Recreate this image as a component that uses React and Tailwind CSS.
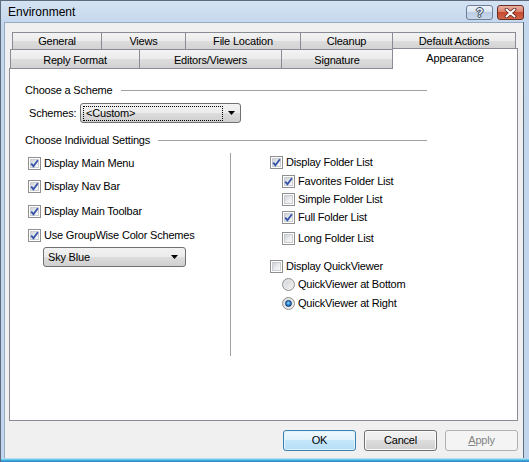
import React from "react";

const tabBg =
  "bg-[linear-gradient(to_bottom,#f3f3f3_0%,#ebebeb_50%,#dddddd_50%,#d2d2d2_100%)]";
const btnBg =
  "bg-[linear-gradient(to_bottom,#f2f2f2_0%,#ebebeb_50%,#dddddd_50%,#cfcfcf_100%)]";

function Arrow() {
  return (
    <svg width="7" height="4" viewBox="0 0 7 4" className="shrink-0">
      <path d="M0 0 H7 L3.5 4 Z" fill="#000" />
    </svg>
  );
}

function Check({ checked }) {
  return (
    <span className="relative w-[13px] h-[13px] border border-[#8f8f8f] bg-white p-px shrink-0 block">
      <span className="block w-[9px] h-[9px] border border-[#c9ccd1] bg-[linear-gradient(135deg,#cfd2d7_0%,#eceef0_60%,#f8f8f8_100%)]" />
      {checked && (
        <svg
          width="13"
          height="13"
          viewBox="0 0 13 13"
          className="absolute left-[-1px] top-[-1px]"
        >
          <path
            d="M3.2 6.6 L5.4 9.2 L9.9 3.2"
            fill="none"
            stroke="#3553a8"
            strokeWidth="1.8"
            strokeLinejoin="miter"
          />
        </svg>
      )}
    </span>
  );
}

function Radio({ checked }) {
  return (
    <span className="relative w-[13px] h-[13px] rounded-full border border-[#8f8f8f] bg-[linear-gradient(135deg,#d6d8db_0%,#f6f6f6_100%)] shrink-0 flex items-center justify-center">
      <span className="w-[9px] h-[9px] rounded-full border border-[#e6e6e6] bg-[linear-gradient(135deg,#cfd2d6_0%,#f4f4f4_100%)] flex items-center justify-center">
        {checked && (
          <span className="w-[7px] h-[7px] rounded-full border border-[#0c3a6e] bg-[radial-gradient(circle_at_45%_40%,#9fdcff_0%,#2b88d8_45%,#0b4a93_100%)]" />
        )}
      </span>
    </span>
  );
}

function CheckRow({ checked, label, className = "" }) {
  return (
    <div className={"flex items-center h-[16px] gap-[3px] " + className}>
      <Check checked={checked} />
      <span>{label}</span>
    </div>
  );
}

function RadioRow({ checked, label, className = "" }) {
  return (
    <div className={"flex items-center h-[16px] gap-[3px] " + className}>
      <Radio checked={checked} />
      <span>{label}</span>
    </div>
  );
}

function Header({ label, className = "" }) {
  return (
    <div className={"flex items-center h-[14px] w-[402px] ml-[15px] " + className}>
      <span>{label}</span>
      <span className="flex-1 h-px bg-[#a0a0a0] ml-[8px]" />
    </div>
  );
}

export default function App() {
  const row1 = [
    ["General", "w-[89px]"],
    ["Views", "w-[84px]"],
    ["File Location", "w-[115px]"],
    ["Cleanup", "w-[92px]"],
    ["Default Actions", "w-[124px] border-r"],
  ];
  const row2 = [
    ["Reply Format", "w-[129px]"],
    ["Editors/Viewers", "w-[142px]"],
    ["Signature", "w-[111px]"],
  ];

  return (
    <div className="w-[529px] h-[462px] flex flex-col bg-[linear-gradient(to_bottom,#d4e2f3_0px,#c5d7ed_22px,#c3d5ec_100%)] border-t border-l border-[#5d6b7d] font-['Liberation_Sans',Arial,sans-serif] text-[11px] tracking-[-0.2px] text-black overflow-hidden">
      {/* Title bar */}
      <div className="h-[21px] flex items-start shrink-0">
        <div className="pl-[7px] pt-[4px] text-[12px] leading-[15px] tracking-normal">Environment</div>
        <div className="ml-auto flex gap-[4px] mt-[4px] mr-[5px]">
          <div className="w-[27px] h-[15px] rounded-[3px] border border-[#6c7f97] bg-[linear-gradient(to_bottom,#eef3fa_0%,#d7e2f0_50%,#bccde4_50%,#c9d8eb_100%)] flex items-center justify-center">
            <span className="text-[12px] font-bold leading-none text-[#e9eef5] [text-shadow:0_0_1px_#3b4b60,0_0_1px_#3b4b60,1px_0_0_#3b4b60,-1px_0_0_#3b4b60,0_1px_0_#3b4b60,0_-1px_0_#3b4b60]">
              ?
            </span>
          </div>
          <div className="w-[27px] h-[15px] rounded-[3px] border border-[#6b2c22] bg-[linear-gradient(to_bottom,#eab1a3_0%,#d97c66_50%,#c74a2f_50%,#d2674c_100%)] flex items-center justify-center">
            <svg width="13" height="10" viewBox="0 0 13 10">
              <path d="M2.5 1.5 L10.5 8.5 M10.5 1.5 L2.5 8.5" stroke="#5a2219" strokeWidth="3.6" strokeLinecap="round" />
              <path d="M2.5 1.5 L10.5 8.5 M10.5 1.5 L2.5 8.5" stroke="#ffffff" strokeWidth="2" strokeLinecap="round" />
            </svg>
          </div>
        </div>
      </div>

      {/* Middle with side frames */}
      <div className="flex-1 flex min-h-0">
        <div className="w-[4px] border-r border-[#97abc4]" />
        <div className="w-[518px] bg-[#f0f0f0] flex flex-col border-t border-[#97abc4]">
          {/* Tabs */}
          <div className="flex flex-col pt-[9px]">
            <div className="flex ml-[7px] h-[17px]">
              {row1.map(([t, w]) => (
                <div
                  key={t}
                  className={
                    "h-full border-t border-l border-[#898c95] flex items-center justify-center pt-[1px] " +
                    tabBg +
                    " " +
                    w
                  }
                >
                  {t}
                </div>
              ))}
            </div>
            <div className="flex items-end ml-[5px] h-[19px]">
              {row2.map(([t, w]) => (
                <div
                  key={t}
                  className={
                    "h-[19px] border-t border-l border-[#898c95] flex items-center justify-center pt-[2px] " +
                    tabBg +
                    " " +
                    w
                  }
                >
                  {t}
                </div>
              ))}
              <div className="relative z-10 w-[126px] h-[21px] -mb-px border-t border-l border-r border-[#898c95] bg-white flex items-center justify-center pb-[1px]">
                Appearance
              </div>
            </div>
          </div>

          {/* Panel */}
          <div className="ml-[4px] w-[509px] h-[353px] border border-[#898c95] bg-white flex flex-col shrink-0">
            <Header label="Choose a Scheme" className="mt-[14px]" />
            <div className="flex items-center mt-[6px] ml-[19px] h-[20px]">
              <span className="w-[51px]">Schemes:</span>
              <div className={"w-[161px] h-[20px] rounded-[3px] border border-[#707070] flex items-center pl-[2px] pr-[5px] " + btnBg}>
                <div className="w-[140px] h-[15px] border border-dotted border-[#000] flex items-center pl-[2px]">
                  &lt;Custom&gt;
                </div>
                <span className="ml-auto">
                  <Arrow />
                </span>
              </div>
            </div>
            <Header label="Choose Individual Settings" className="mt-[10px]" />

            <div className="flex mt-[6px] ml-[15px]">
              <div className="w-[205px] pl-[3px] flex flex-col">
                <CheckRow checked label="Display Main Menu" className="mt-[2px]" />
                <CheckRow checked label="Display Nav Bar" className="mt-[7px]" />
                <CheckRow checked label="Display Main Toolbar" className="mt-[9px]" />
                <CheckRow checked label="Use GroupWise Color Schemes" className="mt-[8px]" />
                <div className={"mt-[4px] ml-[15px] w-[143px] h-[20px] rounded-[3px] border border-[#707070] flex items-center pl-[4px] pr-[7px] " + btnBg}>
                  <span>Sky Blue</span>
                  <span className="ml-auto">
                    <Arrow />
                  </span>
                </div>
              </div>
              <div className="w-px h-[203px] bg-[#a0a0a0]" />
              <div className="pl-[39px] flex flex-col">
                <CheckRow checked label="Display Folder List" className="mt-[1px]" />
                <CheckRow checked label="Favorites Folder List" className="mt-[3px] ml-[12px]" />
                <CheckRow checked={false} label="Simple Folder List" className="mt-[2px] ml-[12px]" />
                <CheckRow checked label="Full Folder List" className="mt-[2px] ml-[12px]" />
                <CheckRow checked={false} label="Long Folder List" className="mt-[5px] ml-[12px]" />
                <CheckRow checked={false} label="Display QuickViewer" className="mt-[12px]" />
                <RadioRow checked={false} label="QuickViewer at Bottom" className="mt-[2px] ml-[12px]" />
                <RadioRow checked label="QuickViewer at Right" className="mt-[3px] ml-[12px]" />
              </div>
            </div>
          </div>

          {/* Buttons */}
          <div className="flex justify-end gap-[8px] mt-[9px] pr-[5px]">
            <div className="w-[73px] h-[21px] rounded-[3px] border border-[#3c7fb1] bg-[linear-gradient(to_bottom,#eef8fe_0%,#def2fd_50%,#c6e7fb_50%,#b4def6_100%)] shadow-[inset_0_0_0_1px_#dff3fd] flex items-center justify-center">
              OK
            </div>
            <div className={"w-[73px] h-[21px] rounded-[3px] border border-[#707070] shadow-[inset_0_0_0_1px_#fbfbfb] flex items-center justify-center " + btnBg}>
              Cancel
            </div>
            <div className="w-[73px] h-[21px] rounded-[3px] border border-[#adb2b5] bg-[#f4f4f4] text-[#838383] flex items-center justify-center">
              <span>
                <span className="underline">A</span>pply
              </span>
            </div>
          </div>
        </div>
        <div className="flex-1 border-l border-[#5d6b7d]" />
      </div>

      {/* Bottom frame */}
      <div className="h-[4px] shrink-0 bg-[linear-gradient(to_bottom,#c3d5ec_0px,#9ee2f6_1px,#3cb4e1_2px,#3a7fc0_4px)]" />
    </div>
  );
}
